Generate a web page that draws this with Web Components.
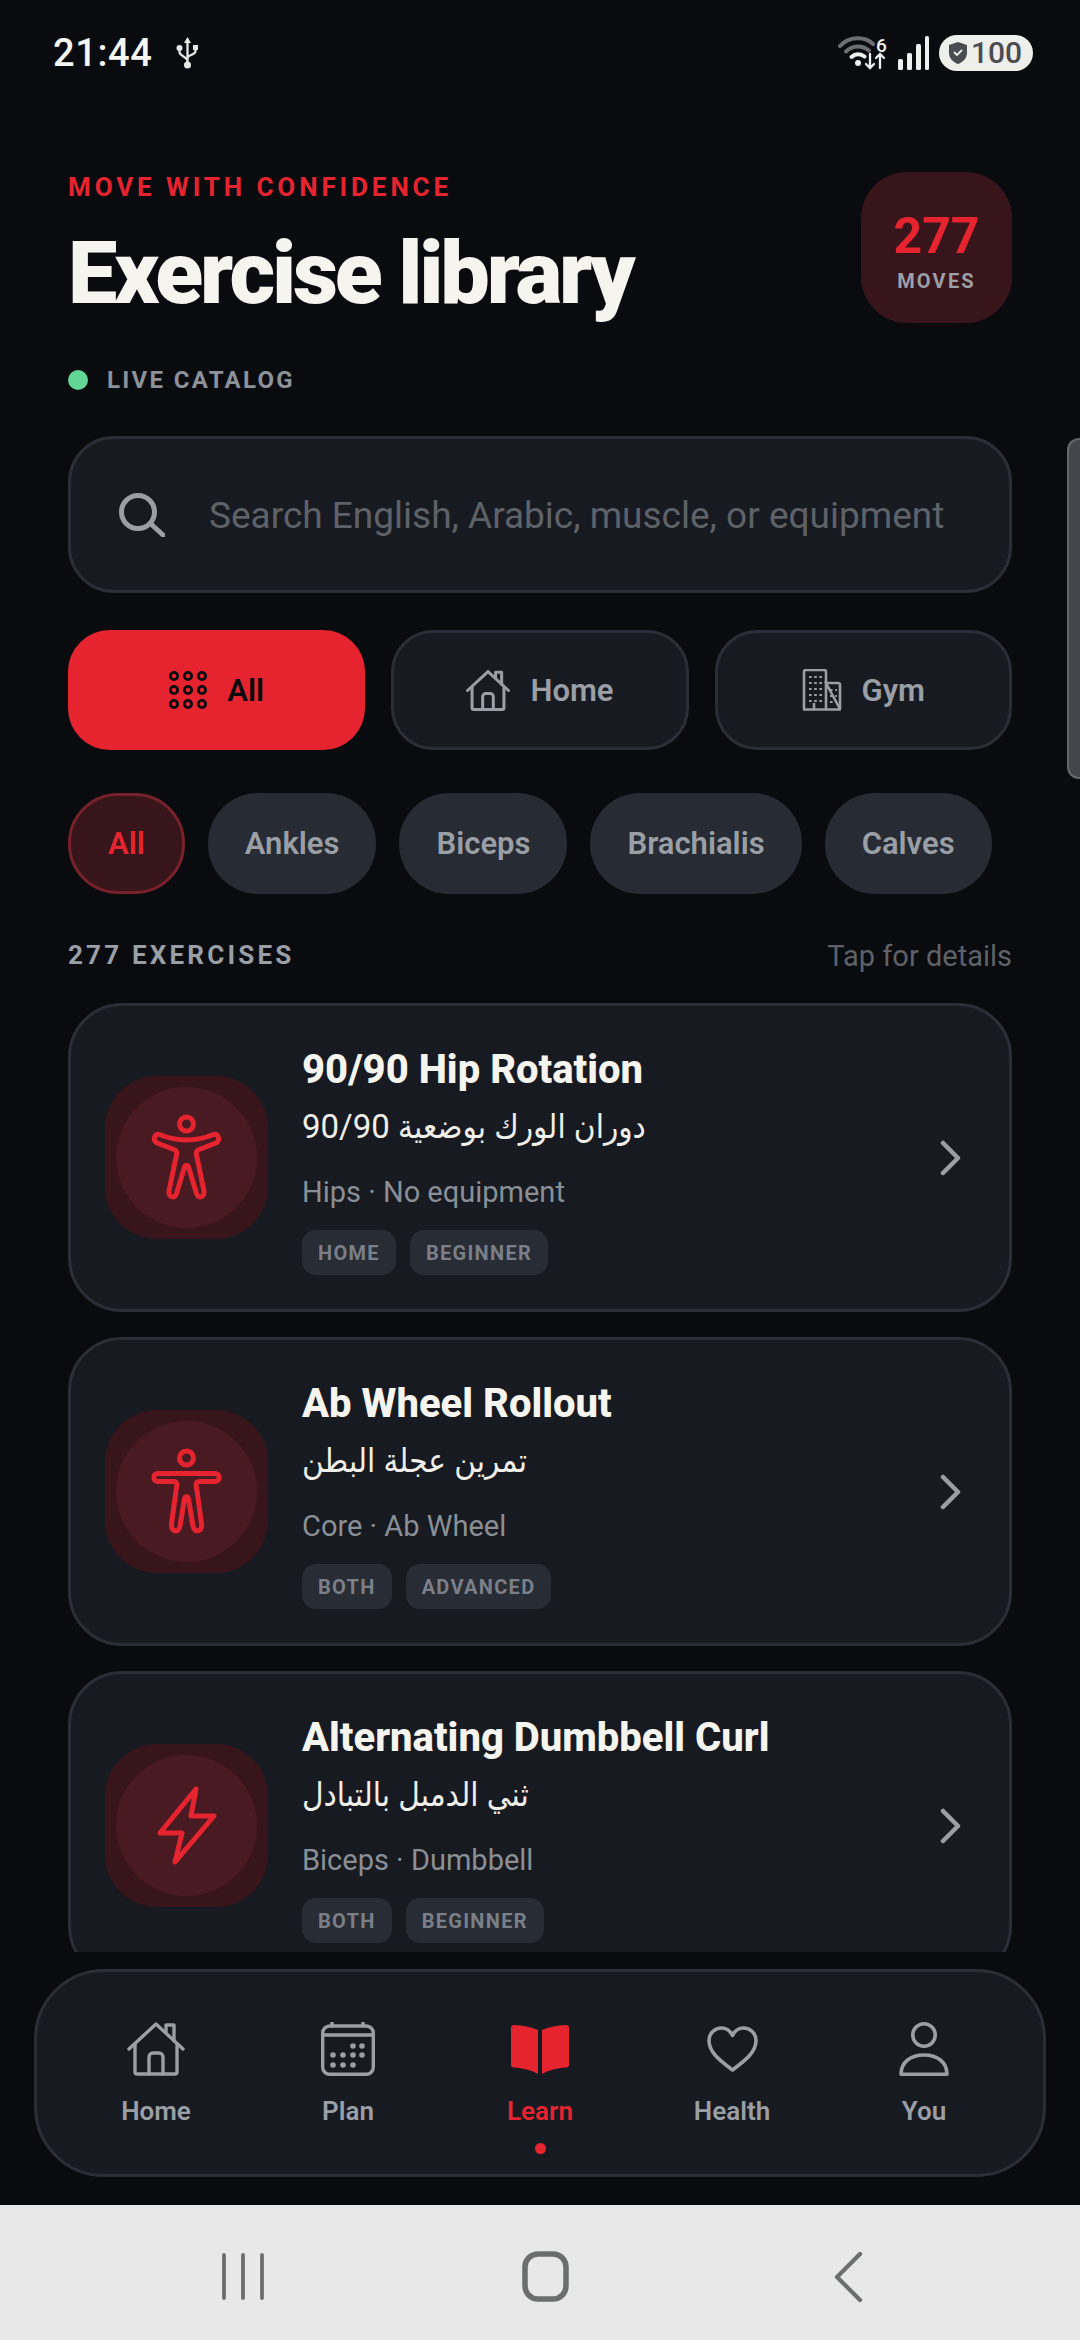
<!DOCTYPE html>
<html lang="en">
<head>
<meta charset="utf-8">
<title>Exercise library</title>
<style>
  html, body { margin: 0; height: 100%; background: #090b0f; }
  body { font-family: Roboto, "Noto Sans", sans-serif; }
</style>
</head>
<body>
<app-screen>
  <status-bar></status-bar>
  <library-header></library-header>
  <search-box placeholder="Search English, Arabic, muscle, or equipment"></search-box>
  <place-tabs></place-tabs>
  <muscle-chips></muscle-chips>
  <list-head></list-head>
  <exercise-list>
    <exercise-card name="90/90 Hip Rotation" arabic="دوران الورك بوضعية 90/90" meta="Hips · No equipment" tags="HOME,BEGINNER" icon="stretch"></exercise-card>
    <exercise-card name="Ab Wheel Rollout" arabic="تمرين عجلة البطن" meta="Core · Ab Wheel" tags="BOTH,ADVANCED" icon="body"></exercise-card>
    <exercise-card name="Alternating Dumbbell Curl" arabic="ثني الدمبل بالتبادل" meta="Biceps · Dumbbell" tags="BOTH,BEGINNER" icon="bolt"></exercise-card>
  </exercise-list>
  <bottom-nav></bottom-nav>
  <system-nav></system-nav>
</app-screen>

<script>
const RED = '#e62430';
const HOUSE = `<path d="M2 27 29 2l27 25"/><path d="M8 22v28a2 2 0 0 0 2 2h38a2 2 0 0 0 2-2V22"/><path d="M22 52V35a4 4 0 0 1 4-4h6a4 4 0 0 1 4 4v17"/><path d="M39 10V3h8v16"/>`;
const ICONS = {
    stretch: `<circle cx="34.500" cy="9" r="7"/><path d="M7.500 19.500C16 23 24 25 34.500 25S53 23 61.500 19.500C66 18 69 25 64 28L47 34.500C45 35.300 44 36.800 44.300 39L52 76C53.200 82 46 84.500 44.500 78.500L36.500 52C36 50 33 50 32.500 52L24.500 78.500C23 84.500 15.800 82 17 76L24.700 39C25 36.800 24 35.300 22 34.500L5 28C0 25 3 18 7.500 19.500Z"/>`,
    body: `<circle cx="34.500" cy="9" r="7"/><path d="M6 24.500H63C68.500 24.500 68.500 32.500 63 32.500H47C45 32.500 44 34 44.200 36L49.500 75C50.500 83 42 84.500 41 77L36.500 50C36 47 33 47 32.500 50L28 77C27 84.500 18.500 83 19.500 75L24.800 36C25 34 24 32.500 22 32.500H6C.5 32.500 .5 24.500 6 24.500Z"/>`,
    bolt: `<path d="M41 5 5 49H27L20 78 59 32H36Z"/>`
};

// every element gets its own shadow root from this
class Base extends HTMLElement {
    constructor() {
        super();
        this.attachShadow({mode: 'open'});
    }
    connectedCallback() {
        this.shadowRoot.innerHTML = this.render();
    }
}

class AppScreen extends Base {
    render() {
        return `<style>
            :host { display: flex; flex-direction: column; width: 1080px; height: 2340px; position: relative; overflow: hidden; background: #090b0f; color: #f5f4ef; }
            .bar { position: absolute; right: 0; top: 438px; width: 13px; height: 341px; box-sizing: border-box; background: #44464b; border-radius: 12px 0 0 12px; border: 2px solid #65676b; border-right: 0; }
        </style><slot></slot><div class="bar"></div>`;
    }
}

class StatusBar extends Base {
    render() {
        return `<style>
            :host { display: flex; align-items: center; justify-content: space-between; height: 106px; padding: 0 47px 0 53px; flex: none; box-sizing: border-box; }
            .left, .right { display: flex; align-items: center; }
            .time { font: 500 38px/1 Roboto, sans-serif; color: #f5f5f2; letter-spacing: .6px; }
            .usb { margin-left: 24px; }
            .wifi { position: relative; width: 50px; height: 36px; }
            .six { position: absolute; left: 38px; top: 1px; font: 500 19px/19px Roboto, sans-serif; color: #f0f0ee; }
            .batt { display: flex; align-items: center; gap: 3px; background: #eeeeea; color: #4a4c52; border-radius: 18px; height: 36px; width: 94px; margin-left: 9px; padding-left: 9px; box-sizing: border-box; font: 500 30px/1 Roboto, sans-serif; }
        </style>
        <div class="left"><span class="time">21:44</span>
            <svg class="usb" width="23" height="32" viewBox="0 0 23 32" fill="none" stroke="#e8e8e6" stroke-width="2.300" stroke-linecap="round"><path d="M11.500 3v25M3.500 13v2c0 4 8 5 8 9M19.500 13v1c0 4-8 4-8 7"/><path d="M11.500 0 8 6h7z" fill="#e8e8e6" stroke="none"/><circle cx="3.500" cy="11" r="3" fill="#e8e8e6" stroke="none"/><rect x="17" y="8" width="5" height="5" fill="#e8e8e6" stroke="none"/><circle cx="11.500" cy="28" r="3.500" fill="#e8e8e6" stroke="none"/></svg>
        </div>
        <div class="right">
            <div class="wifi">
                <svg width="50" height="36" viewBox="0 0 50 36" fill="none" stroke-linecap="round">
                    <path d="M2 11C11 1 27 1 35 9" stroke="#6e6e6e" stroke-width="4"/>
                    <path d="M8 16.500c7-6.500 16-6.500 23-1" stroke="#6e6e6e" stroke-width="4"/>
                    <path d="M13.500 22c4-3.500 9-3.500 13-.5" stroke="#f0f0ee" stroke-width="4"/>
                    <circle cx="20" cy="28" r="3" fill="#f0f0ee"/>
                    <path d="M32 19v14M28 29l4 4 4-4M42 33V19M38 23l4-4 4 4" stroke="#f0f0ee" stroke-width="2.300"/>
                </svg>
                <span class="six">6</span>
            </div>
            <svg width="34" height="36" viewBox="0 0 34 36" fill="#f0f0ee" style="margin-left:8px"><rect x="2" y="24" width="5" height="11" rx="1.500"/><rect x="11" y="18" width="5" height="17" rx="1.500"/><rect x="20" y="9" width="5" height="26" rx="1.500"/><rect x="29" y="1" width="4" height="34" rx="1.500"/></svg>
            <div class="batt">
                <svg width="20" height="24" viewBox="0 0 20 24"><path d="M10 1 19 4v8c0 5-4 9-9 11-5-2-9-6-9-11V4z" fill="#4a4c52"/><path d="M6 11l3 3 5-5" fill="none" stroke="#eeeeea" stroke-width="1.800"/></svg>
                <span>100</span>
            </div>
        </div>`;
    }
}

class LibraryHeader extends Base {
    render() {
        return `<style>
            :host { display: flex; justify-content: space-between; align-items: flex-start; padding: 66px 68px 0; flex: none; height: 330px; box-sizing: border-box; }
            .eyebrow { font: 700 26px/30px Roboto, sans-serif; letter-spacing: 3.900px; color: ${RED}; }
            h1 { margin: 27px 0 0; font: 900 88px/88px Roboto, sans-serif; letter-spacing: -3.200px; color: #f5f4ef; white-space: nowrap; }
            .live { display: flex; align-items: center; gap: 19px; margin-top: 49px; font: 700 24px/28px Roboto, sans-serif; letter-spacing: 2.300px; color: #8d9199; }
            .dot { width: 20px; height: 20px; border-radius: 50%; background: #62d795; }
            .count { width: 151px; height: 151px; border-radius: 46px; background: #38151a; display: flex; flex-direction: column; align-items: center; box-sizing: border-box; padding-top: 39px; }
            .n { font: 700 50px/50px Roboto, sans-serif; color: ${RED}; }
            .m { font: 700 20px/24px Roboto, sans-serif; letter-spacing: 2.200px; color: #9b9fa6; margin-top: 8px; }
        </style>
        <div><div class="eyebrow">MOVE WITH CONFIDENCE</div><h1>Exercise library</h1>
        <div class="live"><span class="dot"></span>LIVE CATALOG</div></div>
        <div class="count"><span class="n">277</span><span class="m">MOVES</span></div>`;
    }
}

class SearchBox extends Base {
    render() {
        return `<style>
            :host { display: flex; align-items: center; gap: 44px; margin: 0 68px; height: 157px; flex: none; box-sizing: border-box; padding-left: 47px; background: #171a21; border: 3px solid #2a2e37; border-radius: 46px; }
            span { font: 400 37px/1 Roboto, sans-serif; color: #5e6268; white-space: nowrap; margin-top: 2px; }
        </style>
        <svg width="47" height="44" viewBox="0 0 47 44" fill="none" stroke="#9a9ea5" stroke-width="5" stroke-linecap="round"><circle cx="20" cy="19" r="16.500"/><path d="M33 31l12 11"/></svg>
        <span>${this.getAttribute('placeholder')}</span>`;
    }
}

class PlaceTabs extends Base {
    render() {
        return `<style>
            :host { display: grid; grid-template-columns: repeat(3, 1fr); gap: 26px; margin: 37px 68px 0; flex: none; }
            .t { display: flex; align-items: center; justify-content: center; gap: 20px; height: 120px; box-sizing: border-box; background: #171a21; border: 3px solid #2a2e37; border-radius: 42px; font: 600 31px/1 Roboto, sans-serif; color: #9a9ea5; }
            .on { background: ${RED}; border-color: ${RED}; color: #090b0f; }
        </style>
        <div class="t on"><svg width="38" height="38" viewBox="0 0 38 38" fill="none" stroke="#090b0f" stroke-width="2.800">
            ${[5, 19, 33].map(y => [5, 19, 33].map(x => `<circle cx="${x}" cy="${y}" r="3.600"/>`).join('')).join('')}</svg>All</div>
        <div class="t"><svg width="44" height="41" viewBox="0 0 58 54" fill="none" stroke="#9a9ea5" stroke-width="4" stroke-linecap="round" stroke-linejoin="round">${HOUSE}</svg>Home</div>
        <div class="t"><svg width="40" height="42" viewBox="0 0 40 42" fill="none" stroke="#9a9ea5" stroke-width="2.600"><path d="M2 40V3a2 2 0 0 1 2-2h18a2 2 0 0 1 2 2v37M24 14h12a2 2 0 0 1 2 2v24zM1 40.500h38M12 34v6"/><path d="M7 8h13M7 14h13M7 20h13M7 26h13M7 32h13M28 21h7M28 27h7M28 33h7" stroke-dasharray="2.600 2.600" stroke-width="2.200"/></svg>Gym</div>`;
    }
}

class MuscleChips extends Base {
    render() {
        const names = ['All', 'Ankles', 'Biceps', 'Brachialis', 'Calves'];
        return `<style>
            :host { display: flex; gap: 23px; margin: 43px 0 0 68px; flex: none; }
            span { display: flex; align-items: center; height: 101px; padding: 0 37px; box-sizing: border-box; border-radius: 50px; background: #272b34; font: 600 31px/1 Roboto, sans-serif; color: #9a9ea5; white-space: nowrap; }
            .on { background: #38151a; border: 3px solid #77212b; color: ${RED}; padding: 0 37px; }
        </style>` + names.map((n, i) => `<span class="${i ? '' : 'on'}">${n}</span>`).join('');
    }
}

class ListHead extends Base {
    render() {
        return `<style>
            :host { display: flex; justify-content: space-between; align-items: center; margin: 44px 68px 0; height: 34px; flex: none; }
            b { font: 700 26px/1 Roboto, sans-serif; letter-spacing: 3.200px; color: #9a9ea5; }
            span { font: 400 29px/1 Roboto, sans-serif; color: #5e6268; margin-top: 3px; }
        </style><b>277 EXERCISES</b><span>Tap for details</span>`;
    }
}

class ExerciseList extends Base {
    render() {
        return `<style>
            :host { display: flex; flex-direction: column; gap: 25px; height: 949px; overflow: hidden; margin: 31px 68px 0; flex: none; }
            ::slotted(*) { flex: none; }
        </style><slot></slot>`;
    }
}

class ExerciseCard extends Base {
    render() {
        const tags = this.getAttribute('tags').split(',');
        const bolt = this.getAttribute('icon') === 'bolt';
        return `<style>
            :host { display: flex; align-items: center; height: 309px; box-sizing: border-box; padding: 0 34px; background: #171a21; border: 3px solid #2a2e37; border-radius: 54px; }
            .box { flex: none; width: 163px; height: 163px; border-radius: 52px; background: #38151a; display: flex; align-items: center; justify-content: center; }
            .disc { width: 141px; height: 141px; border-radius: 50%; background: #4a1a22; display: flex; align-items: center; justify-content: center; }
            .txt { flex: 1; margin: 6px 0 0 34px; min-width: 0; }
            .name { font: 800 40px/46px Roboto, sans-serif; color: #f5f4ef; white-space: nowrap; position: relative; top: 1px; }
            .ar { font: 400 33px/50px Roboto, "DejaVu Sans Condensed", "DejaVu Sans", sans-serif; color: #f0efea; margin-top: 10px; width: max-content; }
            .meta { font: 400 29px/36px Roboto, sans-serif; color: #8a8e95; margin-top: 22px; }
            .tags { display: flex; gap: 14px; margin-top: 20px; }
            .tag { height: 45px; display: flex; align-items: center; padding: 0 16px; border-radius: 14px; background: #282c35; font: 700 20px/1 Roboto, sans-serif; letter-spacing: 1.300px; color: #7b7f87; }
            .go { flex: none; margin-right: 13px; }
        </style>
        <div class="box"><div class="disc"><svg width="${bolt ? 64 : 73}" height="${bolt ? 83 : 89}" viewBox="${bolt ? '0 0 64 83' : '-2 -2 73 89'}" fill="none" stroke="${RED}" stroke-width="5" stroke-linejoin="round">${ICONS[this.getAttribute('icon')]}</svg></div></div>
        <div class="txt">
            <div class="name">${this.getAttribute('name')}</div>
            <div class="ar" dir="rtl">${this.getAttribute('arabic')}</div>
            <div class="meta">${this.getAttribute('meta')}</div>
            <div class="tags">${tags.map(t => `<span class="tag">${t}</span>`).join('')}</div>
        </div>
        <svg class="go" width="22" height="36" viewBox="0 0 22 36" fill="none" stroke="#9a9ea5" stroke-width="4.500" stroke-linecap="round" stroke-linejoin="round"><path d="M3 3l15 15L3 33"/></svg>`;
    }
}

class BottomNav extends Base {
    render() {
        const g = 'fill="none" stroke="#9a9ea5" stroke-linecap="round" stroke-linejoin="round"';
        const tabs = [
            ['Home', `<svg width="58" height="54" viewBox="0 0 58 54" ${g} stroke-width="3.400">${HOUSE}</svg>`],
            ['Plan', `<svg width="54" height="54" viewBox="0 0 54 54" ${g} stroke-width="3.400"><path d="M11 0v4M42 0v4"/><rect x="1.700" y="4" width="50.600" height="48.300" rx="7"/><path d="M2 13h50"/><g fill="#9a9ea5" stroke="none">${[[32, 24], [41, 24], [12, 33], [22, 33], [32, 33], [41, 33], [12, 43], [22, 43], [32, 43]].map(p => `<circle cx="${p[0]}" cy="${p[1]}" r="2.800"/>`).join('')}</g></svg>`],
            ['Learn', `<svg width="58" height="49" viewBox="0 0 58 49" fill="${RED}"><path d="M27 5C20 2 12 .5 3 0 1 0 0 1 0 3v37c0 1.500 1 2.500 3 2.500 9 .5 17 2.500 24 6.500zM31 5c7-3 15-4.500 24-5 2 0 3 1 3 3v37c0 1.500-1 2.500-3 2.500-9 .5-17 2.500-24 6.500z"/></svg>`],
            ['Health', `<svg width="51" height="46" viewBox="0 0 51 46" ${g} stroke-width="3.600"><path d="M25.500 44C12 34 2 26 2 14.500 2 7 8 2 14.500 2c4.500 0 8.500 2.500 11 7.500C28 4.500 32 2 36.500 2 43 2 49 7 49 14.500 49 26 39 34 25.500 44z"/></svg>`],
            ['You', `<svg width="50" height="54" viewBox="0 0 50 54" ${g} stroke-width="3.600"><circle cx="25" cy="13" r="11.200"/><path d="M2 52.200C2 40 12 33 25 33s23 7 23 19.200z"/></svg>`]
        ];
        return `<style>
            :host { display: grid; grid-template-columns: repeat(5, 192px); justify-content: center; box-sizing: border-box; height: 208px; margin: 17px 34px 0; flex: none; padding-top: 50px; background: #171a21; border: 3px solid #2a2e37; border-radius: 70px; }
            .tab { display: flex; flex-direction: column; align-items: center; font: 600 26px/32px Roboto, sans-serif; color: #9a9ea5; }
            .ic { height: 54px; display: flex; align-items: center; margin-bottom: 19px; }
            .on { color: ${RED}; }
            .on::after { content: ""; width: 11px; height: 11px; margin-top: 16px; border-radius: 50%; background: ${RED}; }
        </style>` + tabs.map((t, i) => `<div class="tab ${i === 2 ? 'on' : ''}"><div class="ic">${t[1]}</div>${t[0]}</div>`).join('');
    }
}

class SystemNav extends Base {
    render() {
        return `<style>
            :host { display: flex; align-items: center; justify-content: center; position: absolute; left: 0; right: 0; bottom: 0; height: 135px; background: #e8e8e8; }
            svg { display: block; }
        </style>
        <svg width="1080" height="135" viewBox="0 0 1080 135" fill="none" stroke="#6c6e6e" stroke-linecap="round" stroke-linejoin="round">
            <path d="M224 50v43M243 50v43M262 50v43" stroke-width="3.800"/>
            <rect x="525" y="49" width="41" height="45" rx="13" stroke-width="5.500"/>
            <path d="M860 49l-23 23 23 23" stroke-width="4.200"/>
        </svg>`;
    }
}

customElements.define('app-screen', AppScreen);
customElements.define('status-bar', StatusBar);
customElements.define('library-header', LibraryHeader);
customElements.define('search-box', SearchBox);
customElements.define('place-tabs', PlaceTabs);
customElements.define('muscle-chips', MuscleChips);
customElements.define('list-head', ListHead);
customElements.define('exercise-list', ExerciseList);
customElements.define('exercise-card', ExerciseCard);
customElements.define('bottom-nav', BottomNav);
customElements.define('system-nav', SystemNav);
</script>
</body>
</html>
